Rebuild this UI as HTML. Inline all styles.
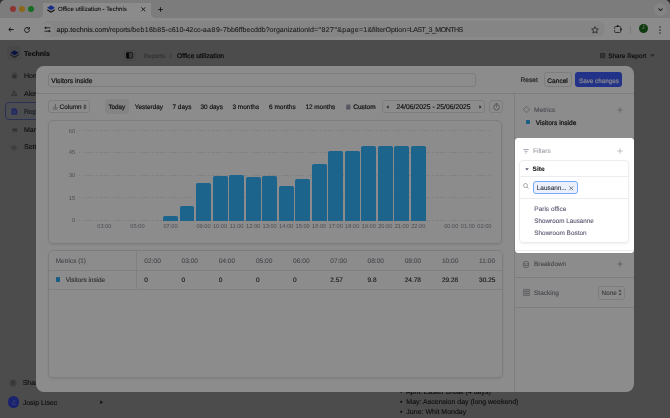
<!DOCTYPE html>
<html><head><meta charset="utf-8">
<style>
*{box-sizing:border-box;margin:0;padding:0}
html,body{width:670px;height:418px;overflow:hidden;background:#fff}
body{position:relative;font-family:"Liberation Sans",sans-serif;color:#18181b;text-rendering:geometricPrecision}
.a{position:absolute}
.t{position:absolute;white-space:nowrap;line-height:11.6px;font-size:6.5px}
.t{-webkit-text-stroke:0.1px currentColor}
.m{-webkit-text-stroke:0.2px currentColor}
svg{position:absolute;overflow:visible}
</style></head><body>
<div id="root" style="position:absolute;left:0;top:0;width:670px;height:418px;will-change:transform">

<!-- ============ CHROME ============ -->
<div class="a" style="left:0;top:0;width:670px;height:40px;background:#fdfdfd"></div>

<div class="a" style="left:0;top:0;width:42.7px;height:17.6px;background:#e2e2e2;border-radius:0 0 4.5px 0"></div>
<div class="a" style="left:150.9px;top:0;width:520px;height:17.6px;background:#e2e2e2;border-radius:0 0 0 4.5px"></div>
<div class="a" style="left:42.7px;top:0;width:108.2px;height:3px;background:#e2e2e2"></div>
<div class="a" style="left:42.7px;top:2.8px;width:108.2px;height:16px;background:#fdfdfd;border-radius:6px 6px 0 0"></div>
<div class="a" style="left:9.5px;top:6.3px;width:6px;height:6px;border-radius:50%;background:#ff5f57"></div>
<div class="a" style="left:19px;top:6.3px;width:6px;height:6px;border-radius:50%;background:#febc2e"></div>
<div class="a" style="left:28px;top:6.3px;width:6px;height:6px;border-radius:50%;background:#28c840"></div>
<!-- favicon -->
<svg style="left:46.5px;top:5.2px" width="8" height="8" viewBox="0 0 8 8"><path d="M0.3 4.2L4 6.5L7.7 4.2L7.7 5.4L4 7.7L0.3 5.4Z" fill="#0a0a0a"/><path d="M4 0.3L7.6 2.6Q7.9 2.8 7.6 3L4 5.3L0.4 3Q0.1 2.8 0.4 2.6Z" fill="#2d50f0"/></svg>
<div class="t" style="left:58px;top:3.8px;font-size:6.1px;color:#1e1e1e">Office utilization - Technis</div>
<svg style="left:141px;top:7.2px" width="4.6" height="4.6"><path d="M0.4 0.4L4.2 4.2M4.2 0.4L0.4 4.2" stroke="#222" stroke-width="0.9"/></svg>
<svg style="left:157.5px;top:6.9px" width="5" height="5"><path d="M2.5 0.2V4.8M0.2 2.5H4.8" stroke="#222" stroke-width="0.85"/></svg>
<div class="a" style="left:653.9px;top:2.5px;width:13px;height:13px;border-radius:50%;background:#f0f0f0"></div>
<svg style="left:658.1px;top:7.6px" width="5" height="3.2"><path d="M0.5 0.5L2.5 2.5L4.5 0.5" stroke="#222" stroke-width="1.05" fill="none"/></svg>


<svg style="left:7.5px;top:26.9px" width="6" height="5"><path d="M5.6 2.5H0.9M2.9 0.5L0.8 2.5L2.9 4.5" stroke="#222" stroke-width="0.95" fill="none"/></svg>
<svg style="left:24.2px;top:26.5px" width="6" height="6"><path d="M5 1.6A2.45 2.45 0 1 0 5.45 3.2" stroke="#222" stroke-width="0.95" fill="none"/><path d="M5.4 0.2V2H3.6" stroke="#222" stroke-width="0.95" fill="none"/></svg>
<div class="a" style="left:40px;top:21px;width:565px;height:16px;border-radius:8px;background:#f3f3f3"></div>
<div class="a" style="left:40px;top:22.6px;width:13.4px;height:13.4px;border-radius:50%;background:#fbfbfb"></div>
<svg style="left:43.6px;top:26px" width="7" height="7"><path d="M2.5 1.8H6.5M0.5 5.2H4.5" stroke="#333" stroke-width="0.9"/><circle cx="1.6" cy="1.8" r="1.1" fill="#333"/><circle cx="5.4" cy="5.2" r="1.1" fill="#333"/></svg>
<div class="t" style="left:56.50px;top:25px;font-size:7.05px;color:#1f1f1f;letter-spacing:0.013px">app.technis.com</div>
<div class="t" style="left:108.00px;top:25px;font-size:7.05px;color:#36393e;letter-spacing:-0.183px">/reports/</div>
<div class="t" style="left:132.20px;top:25px;font-size:7.05px;color:#36393e;letter-spacing:0.255px">beb16b85-</div>
<div class="t" style="left:168.20px;top:25px;font-size:7.05px;color:#36393e;letter-spacing:-0.036px">c610-42cc-</div>
<div class="t" style="left:202.70px;top:25px;font-size:7.05px;color:#36393e;letter-spacing:0.477px">aa89-</div>
<div class="t" style="left:223.10px;top:25px;font-size:7.05px;color:#36393e;letter-spacing:0.002px">7bb6ffbecddb</div>
<div class="t" style="left:265.70px;top:25px;font-size:7.05px;color:#36393e;letter-spacing:0.006px">?organizationId</div>
<div class="t" style="left:314.00px;top:25px;font-size:7.05px;color:#36393e;letter-spacing:0.404px">="827"</div>
<div class="t" style="left:337.30px;top:25px;font-size:7.05px;color:#36393e;letter-spacing:0.242px">&amp;page=1</div>
<div class="t" style="left:367.40px;top:25px;font-size:7.05px;color:#36393e;letter-spacing:0.001px">&amp;filterOption</div>
<div class="t" style="left:406.20px;top:25px;font-size:7.05px;color:#36393e;letter-spacing:-0.539px">=LAST_3_MONTHS</div>
<svg style="left:591px;top:25.5px" width="8" height="8" viewBox="0 0 8 8"><path d="M4 0.6L5 2.9L7.4 3.1L5.6 4.7L6.1 7.1L4 5.8L1.9 7.1L2.4 4.7L0.6 3.1L3 2.9Z" fill="none" stroke="#222" stroke-width="0.7" stroke-linejoin="round"/></svg>
<svg style="left:613px;top:24px" width="10" height="10"><rect x="1.6" y="2.5" width="6.1" height="6" rx="1" stroke="#2a2a2a" stroke-width="0.75" fill="none"/><circle cx="4.7" cy="1.9" r="0.95" fill="#2a2a2a"/><circle cx="8.2" cy="5.4" r="0.85" fill="#2a2a2a"/><circle cx="1.3" cy="5.4" r="0.7" fill="#fdfdfd"/></svg>
<div class="a" style="left:630.3px;top:25.8px;width:0.7px;height:6.8px;background:#dcdcdc"></div>
<div class="a" style="left:638.5px;top:24.1px;width:9.4px;height:9.4px;border-radius:50%;background:#1e6b1e"></div>
<div class="t" style="left:638.5px;top:23px;width:9.4px;text-align:center;font-size:5px;color:#d0e8d0;-webkit-text-stroke:0">J</div>
<svg style="left:658.5px;top:25.5px" width="2" height="8"><circle cx="1" cy="1" r="0.75" fill="#333"/><circle cx="1" cy="4" r="0.75" fill="#333"/><circle cx="1" cy="7" r="0.75" fill="#333"/></svg>

<!-- ============ PAGE ============ -->
<div class="a" style="left:0;top:40px;width:670px;height:378px;background:#fafafa"></div>
<div class="a" style="left:6.6px;top:46px;width:14.9px;height:14px;border-radius:3px;background:#eeeff6"></div>
<svg style="left:9.6px;top:49.5px" width="9" height="8" viewBox="0 0 9 8"><path d="M0.3 4.3L4.5 6.9L8.7 4.3L8.7 5.1L4.5 7.7L0.3 5.1Z" fill="#0a0a0a"/><path d="M4.5 0.3L8.7 2.8L4.5 5.4L0.3 2.8Z" fill="#2d44d8"/></svg>
<div class="t" style="left:24px;top:48.8px;font-size:7px;font-weight:700">Technis</div>
<div class="a" style="left:123.5px;top:50px;width:12.5px;height:10.5px;border-radius:3px;border:0.6px solid #e4e4e7;background:#fff"></div>
<svg style="left:126.2px;top:52px" width="7.5" height="7"><rect x="0.4" y="0.4" width="6.4" height="5.9" rx="1.2" stroke="#333" stroke-width="0.8" fill="#bbb"/><rect x="0.4" y="0.4" width="2.6" height="5.9" rx="0.8" fill="#222"/></svg>
<div class="t" style="left:143.5px;top:50.7px;font-size:6.2px;color:#a1a1aa">Reports</div>
<div class="t" style="left:170px;top:50.7px;font-size:6.1px;color:#a1a1aa">/</div>
<div class="t m" style="left:177px;top:50.7px;font-size:6.7px;color:#18181b">Office utilization</div>
<svg style="left:600.2px;top:53px" width="5.5" height="5.5"><rect x="0" y="0" width="5.3" height="5.3" rx="1" fill="#8a8a92"/><rect x="1" y="1" width="3.3" height="3.3" fill="#b0b0b8"/></svg>
<div class="t" style="left:608.3px;top:50.7px;font-size:6.4px;color:#1c1c1c;-webkit-text-stroke:0.14px currentColor">Share Report</div>
<svg style="left:650px;top:53.8px" width="5" height="3.5"><path d="M0.2 0.3H4.8L2.5 3Z" fill="#8a8a92"/></svg>

<!-- sidebar -->
<svg style="left:10.8px;top:72.3px" width="7" height="7"><circle cx="3.5" cy="3.5" r="3.2" fill="#d4d4d8"/><path d="M1.8 6.2V3.8L3.5 2.3L5.2 3.8V6.2Z" fill="#a1a1aa"/></svg>
<div class="t" style="left:24px;top:71.2px;font-size:7px;color:#27272a">Home</div>
<svg style="left:11.3px;top:90.2px" width="6.5" height="6"><path d="M3.2 0.5L6 5.6H0.4Z" fill="#d8d8de" stroke="#9a9aa4" stroke-width="0.7" stroke-linejoin="round"/></svg>
<div class="t" style="left:24px;top:88.6px;font-size:7px;color:#27272a">Alerts</div>
<div class="t" style="left:24px;top:107.0px;font-size:7px;color:#27272a">Reports</div>
<svg style="left:11.6px;top:127.6px" width="6" height="6"><rect x="0.3" y="0.4" width="5" height="2.8" rx="0.4" fill="#a8a8b8"/><path d="M1.5 3.2V5M4.1 3.2V5" stroke="#a8a8b8" stroke-width="0.7"/></svg>
<div class="t" style="left:24px;top:125.0px;font-size:7px;color:#27272a">Manage</div>
<svg style="left:11.2px;top:144.6px" width="5.6" height="5.6"><circle cx="2.8" cy="2.8" r="2.1" fill="none" stroke="#b0b0c0" stroke-width="1.3" stroke-dasharray="0.9 0.75"/><circle cx="2.8" cy="2.8" r="1.3" fill="#b0b0c0"/><circle cx="2.8" cy="2.8" r="0.6" fill="#fafafa"/></svg>
<div class="t" style="left:24px;top:142.2px;font-size:7px;color:#27272a">Settings</div>

<svg style="left:9.3px;top:379.4px" width="8" height="8"><circle cx="4" cy="4" r="3.6" fill="#d0d0d6"/><text x="4" y="5.9" font-size="5" text-anchor="middle" fill="#6a6a74" font-family="Liberation Sans">?</text></svg>
<div class="t" style="left:22.7px;top:377.8px;font-size:7px;color:#27272a">Share</div>
<div class="t" style="left:22.7px;top:397.5px;font-size:7px;color:#27272a">Josip Lisec</div>
<svg style="left:100.3px;top:400.2px" width="3.5" height="4.6"><path d="M0.3 0.3L3 2.3L0.3 4.3Z" fill="#3a3a3a"/></svg>

<!-- bullet list -->
<div class="t" style="left:400px;top:386.8px;font-size:7px;color:#27272a">&#8226;&nbsp; April: Easter break (4 days)</div>
<div class="t" style="left:400px;top:396.6px;font-size:7px;color:#27272a">&#8226;&nbsp; May: Ascension day (long weekend)</div>
<div class="t" style="left:400px;top:407px;font-size:7px;color:#27272a">&#8226;&nbsp; June: Whit Monday</div>

<!-- modal backdrop -->
<div class="a" id="backdrop" style="left:0;top:40px;width:670px;height:378px;background:rgba(0,0,0,0.45)"></div>

<div class="a" style="left:7.8px;top:396.3px;width:11.5px;height:11.5px;border-radius:50%;background:#3040c8"></div>
<svg style="left:10.5px;top:399px" width="6" height="6"><path d="M2.5 0.8V3.5A1 1 0 0 1 0.8 3.8M3.5 2.2L5.2 2.2M1 5.2H5" stroke="#7a86d8" stroke-width="0.6" fill="none"/></svg>
<div class="a" style="left:5.1px;top:102.2px;width:110px;height:18px;border-radius:4px;border:0.8px solid #4d5a98;background:rgba(150,160,220,0.12)"></div>
<svg style="left:11.2px;top:108px" width="7" height="7"><path d="M0.5 1.1A0.8 0.8 0 0 1 1.3 0.3H4.6L6.3 2V5.9A0.8 0.8 0 0 1 5.5 6.7H1.3A0.8 0.8 0 0 1 0.5 5.9Z" fill="#3f4db0"/><path d="M1.8 3.3H5M1.8 4.7H5" stroke="#7480c0" stroke-width="0.6"/></svg>
<!-- ============ MODAL ============ -->
<div class="a" id="modal" style="left:36px;top:66px;width:598px;height:326px;background:#fff;border-radius:8px;overflow:hidden">
  <!-- header -->
  <div class="a" style="left:12px;top:6.6px;width:427.5px;height:14.4px;border:0.7px solid #e4e4e7;border-radius:3px"></div>
  <div class="t m" style="left:15.3px;top:9.6px;font-size:6.7px;color:#202024">Visitors inside</div>
  <div class="t m" style="left:484.6px;top:9.4px;font-size:6.6px;color:#4a4a52">Reset</div>
  <div class="a" style="left:507.7px;top:6.4px;width:27.9px;height:14.6px;border:0.7px solid #e4e4e7;border-radius:3px;background:#fff"></div>
  <div class="t m" style="left:511.3px;top:9.5px;font-size:6.6px;color:#18181b">Cancel</div>
  <div class="a" style="left:539px;top:6px;width:47.4px;height:15.2px;border-radius:3px;background:#3d5cf8"></div>
  <div class="t m" style="left:543px;top:9.5px;font-size:6.3px;color:#eceeff">Save changes</div>
  <div class="a" style="left:0;top:26.5px;width:598px;height:0.7px;background:#e4e4e7"></div>

  <!-- toolbar -->
  <div class="a" style="left:12px;top:33.5px;width:42.4px;height:13.8px;border:0.7px solid #e4e4e7;border-radius:3px"></div>
  <svg style="left:15.5px;top:37.3px" width="6" height="7"><path d="M0.5 6.3H5.5" stroke="#b0b0b8" stroke-width="0.7"/><path d="M2 5.8V3.2M3.5 5.8V1M5 5.8V4" stroke="#9c9ca6" stroke-width="0.8"/></svg>
  <div class="t" style="left:23.6px;top:35.6px;font-size:6.4px;color:#2a2a2e;-webkit-text-stroke:0.16px currentColor">Column</div>
  <svg style="left:47.2px;top:38px" width="4" height="6"><path d="M0.2 2.4L1.9 0.2L3.6 2.4ZM0.2 3.2L1.9 5.4L3.6 3.2Z" fill="#6e6e7a"/></svg>

  <div class="a" style="left:68.8px;top:33.3px;width:24.2px;height:14.3px;border-radius:3px;background:#f0f0f2"></div>
  <div class="t m" style="left:72.4px;top:35.5px;font-size:6.3px;color:#27272a">Today</div>
  <div class="t" style="-webkit-text-stroke:0.16px currentColor;left:98.8px;top:35.5px;font-size:6.4px;color:#18181b">Yesterday</div>
  <div class="t" style="-webkit-text-stroke:0.16px currentColor;left:136.5px;top:35.5px;font-size:6.4px;color:#18181b">7 days</div>
  <div class="t" style="-webkit-text-stroke:0.16px currentColor;left:164.5px;top:35.5px;font-size:6.4px;color:#18181b">30 days</div>
  <div class="t" style="-webkit-text-stroke:0.16px currentColor;left:196.4px;top:35.5px;font-size:6.5px;color:#18181b">3 months</div>
  <div class="t" style="-webkit-text-stroke:0.16px currentColor;left:233px;top:35.5px;font-size:6.5px;color:#18181b">6 months</div>
  <div class="t" style="-webkit-text-stroke:0.16px currentColor;left:269.4px;top:35.5px;font-size:6.4px;color:#18181b">12 months</div>
  <svg style="left:309.8px;top:37.6px" width="5" height="6"><rect x="0.2" y="0.5" width="4.2" height="5" rx="0.6" fill="#9a9aae"/><path d="M0.2 1.9H4.4" stroke="#d0d0dc" stroke-width="0.5"/></svg>
  <div class="t m" style="left:317.2px;top:35.5px;font-size:6.5px;color:#18181b">Custom</div>

  <div class="a" style="left:346.4px;top:33.6px;width:102.6px;height:13.8px;border:0.7px solid #e4e4e7;border-radius:3px"></div>
  <svg style="left:350.3px;top:38.5px" width="3" height="4"><path d="M2.7 0.2L0.3 2L2.7 3.8Z" fill="#555"/></svg>
  <div class="t" style="left:360.5px;top:35.5px;font-size:6.8px;color:#1c1c20;-webkit-text-stroke:0.16px currentColor">24/06/2025 - 25/06/2025</div>
  <svg style="left:443px;top:38.5px" width="3" height="4"><path d="M0.3 0.2L2.7 2L0.3 3.8Z" fill="#555"/></svg>
  <div class="a" style="left:453px;top:33.6px;width:13.7px;height:13.8px;border:0.7px solid #e4e4e7;border-radius:3px"></div>
  <svg style="left:456.5px;top:37px" width="7" height="8"><circle cx="3.5" cy="4.3" r="2.8" stroke="#777" stroke-width="0.7" fill="none"/><path d="M2.5 0.6H4.5M3.5 2.5V4.3" stroke="#777" stroke-width="0.7"/></svg>

  <!-- right panel border -->
  <div class="a" style="left:478.3px;top:27px;width:0.8px;height:300px;background:#e4e4e7"></div>

  <!-- chart card -->
  <div class="a" style="left:12.2px;top:53.6px;width:453.8px;height:124.6px;border:0.7px solid #e4e4e7;border-radius:5px;box-shadow:0 1px 2.5px rgba(0,0,0,0.1)"></div>
  <!--chart--><div class="a" style="left:43px;top:154px;width:413.6px;height:1px;background:repeating-linear-gradient(90deg,#e6e6ea 0 1.4px,transparent 1.4px 2.8px)"></div>
<div class="t" style="left:9.200000000000003px;top:150.10px;width:30px;text-align:right;font-size:5.8px;color:#8c8c9c;-webkit-text-stroke:0">0</div>
<div class="a" style="left:43px;top:131px;width:413.6px;height:1px;background:repeating-linear-gradient(90deg,#e6e6ea 0 1.4px,transparent 1.4px 2.8px)"></div>
<div class="t" style="left:9.200000000000003px;top:127.55px;width:30px;text-align:right;font-size:5.8px;color:#8c8c9c;-webkit-text-stroke:0">15</div>
<div class="a" style="left:43px;top:109px;width:413.6px;height:1px;background:repeating-linear-gradient(90deg,#e6e6ea 0 1.4px,transparent 1.4px 2.8px)"></div>
<div class="t" style="left:9.200000000000003px;top:105.00px;width:30px;text-align:right;font-size:5.8px;color:#8c8c9c;-webkit-text-stroke:0">30</div>
<div class="a" style="left:43px;top:86px;width:413.6px;height:1px;background:repeating-linear-gradient(90deg,#e6e6ea 0 1.4px,transparent 1.4px 2.8px)"></div>
<div class="t" style="left:9.200000000000003px;top:82.45px;width:30px;text-align:right;font-size:5.8px;color:#8c8c9c;-webkit-text-stroke:0">45</div>
<div class="a" style="left:43px;top:64px;width:413.6px;height:1px;background:repeating-linear-gradient(90deg,#e6e6ea 0 1.4px,transparent 1.4px 2.8px)"></div>
<div class="t" style="left:9.200000000000003px;top:61.30px;width:30px;text-align:right;font-size:5.8px;color:#8c8c9c;-webkit-text-stroke:0">60</div>
<div class="a" style="left:127.05px;top:150.30px;width:14.9px;height:4.50px;background:#36b6ff;border-radius:1.7px 1.7px 0 0"></div>
<div class="a" style="left:143.57px;top:139.60px;width:14.9px;height:15.20px;background:#36b6ff;border-radius:1.7px 1.7px 0 0"></div>
<div class="a" style="left:160.09px;top:116.80px;width:14.9px;height:38.00px;background:#36b6ff;border-radius:1.7px 1.7px 0 0"></div>
<div class="a" style="left:176.61px;top:110.10px;width:14.9px;height:44.70px;background:#36b6ff;border-radius:1.7px 1.7px 0 0"></div>
<div class="a" style="left:193.13px;top:108.50px;width:14.9px;height:46.30px;background:#36b6ff;border-radius:1.7px 1.7px 0 0"></div>
<div class="a" style="left:209.65px;top:110.90px;width:14.9px;height:43.90px;background:#36b6ff;border-radius:1.7px 1.7px 0 0"></div>
<div class="a" style="left:226.17px;top:110.10px;width:14.9px;height:44.70px;background:#36b6ff;border-radius:1.7px 1.7px 0 0"></div>
<div class="a" style="left:242.69px;top:120.00px;width:14.9px;height:34.80px;background:#36b6ff;border-radius:1.7px 1.7px 0 0"></div>
<div class="a" style="left:259.21px;top:112.80px;width:14.9px;height:42.00px;background:#36b6ff;border-radius:1.7px 1.7px 0 0"></div>
<div class="a" style="left:275.73px;top:98.40px;width:14.9px;height:56.40px;background:#36b6ff;border-radius:1.7px 1.7px 0 0"></div>
<div class="a" style="left:292.25px;top:85.00px;width:14.9px;height:69.80px;background:#36b6ff;border-radius:1.7px 1.7px 0 0"></div>
<div class="a" style="left:308.77px;top:85.10px;width:14.9px;height:69.70px;background:#36b6ff;border-radius:1.7px 1.7px 0 0"></div>
<div class="a" style="left:325.29px;top:80.30px;width:14.9px;height:74.50px;background:#36b6ff;border-radius:1.7px 1.7px 0 0"></div>
<div class="a" style="left:341.81px;top:80.30px;width:14.9px;height:74.50px;background:#36b6ff;border-radius:1.7px 1.7px 0 0"></div>
<div class="a" style="left:358.33px;top:80.30px;width:14.9px;height:74.50px;background:#36b6ff;border-radius:1.7px 1.7px 0 0"></div>
<div class="a" style="left:374.85px;top:80.30px;width:14.9px;height:74.50px;background:#36b6ff;border-radius:1.7px 1.7px 0 0"></div>
<div class="t" style="left:53.42px;top:155.80px;width:30px;text-align:center;font-size:5.7px;color:#8c8c9c;-webkit-text-stroke:0">03:00</div>
<div class="t" style="left:86.46px;top:155.80px;width:30px;text-align:center;font-size:5.7px;color:#8c8c9c;-webkit-text-stroke:0">05:00</div>
<div class="t" style="left:119.50px;top:155.80px;width:30px;text-align:center;font-size:5.7px;color:#8c8c9c;-webkit-text-stroke:0">07:00</div>
<div class="t" style="left:152.54px;top:155.80px;width:30px;text-align:center;font-size:5.7px;color:#8c8c9c;-webkit-text-stroke:0">09:00</div>
<div class="t" style="left:169.06px;top:155.80px;width:30px;text-align:center;font-size:5.7px;color:#8c8c9c;-webkit-text-stroke:0">10:00</div>
<div class="t" style="left:185.58px;top:155.80px;width:30px;text-align:center;font-size:5.7px;color:#8c8c9c;-webkit-text-stroke:0">11:00</div>
<div class="t" style="left:202.10px;top:155.80px;width:30px;text-align:center;font-size:5.7px;color:#8c8c9c;-webkit-text-stroke:0">12:00</div>
<div class="t" style="left:218.62px;top:155.80px;width:30px;text-align:center;font-size:5.7px;color:#8c8c9c;-webkit-text-stroke:0">13:00</div>
<div class="t" style="left:235.14px;top:155.80px;width:30px;text-align:center;font-size:5.7px;color:#8c8c9c;-webkit-text-stroke:0">14:00</div>
<div class="t" style="left:251.66px;top:155.80px;width:30px;text-align:center;font-size:5.7px;color:#8c8c9c;-webkit-text-stroke:0">15:00</div>
<div class="t" style="left:268.18px;top:155.80px;width:30px;text-align:center;font-size:5.7px;color:#8c8c9c;-webkit-text-stroke:0">16:00</div>
<div class="t" style="left:284.70px;top:155.80px;width:30px;text-align:center;font-size:5.7px;color:#8c8c9c;-webkit-text-stroke:0">17:00</div>
<div class="t" style="left:301.22px;top:155.80px;width:30px;text-align:center;font-size:5.7px;color:#8c8c9c;-webkit-text-stroke:0">18:00</div>
<div class="t" style="left:317.74px;top:155.80px;width:30px;text-align:center;font-size:5.7px;color:#8c8c9c;-webkit-text-stroke:0">19:00</div>
<div class="t" style="left:334.26px;top:155.80px;width:30px;text-align:center;font-size:5.7px;color:#8c8c9c;-webkit-text-stroke:0">20:00</div>
<div class="t" style="left:350.78px;top:155.80px;width:30px;text-align:center;font-size:5.7px;color:#8c8c9c;-webkit-text-stroke:0">21:00</div>
<div class="t" style="left:367.30px;top:155.80px;width:30px;text-align:center;font-size:5.7px;color:#8c8c9c;-webkit-text-stroke:0">22:00</div>
<div class="t" style="left:400.34px;top:155.80px;width:30px;text-align:center;font-size:5.7px;color:#8c8c9c;-webkit-text-stroke:0">00:00</div>
<div class="t" style="left:416.86px;top:155.80px;width:30px;text-align:center;font-size:5.7px;color:#8c8c9c;-webkit-text-stroke:0">01:00</div>
<div class="t" style="left:433.38px;top:155.80px;width:30px;text-align:center;font-size:5.7px;color:#8c8c9c;-webkit-text-stroke:0">02:00</div>
<!--/chart-->

  <!-- table card -->
  <div class="a" style="left:12px;top:184px;width:454.5px;height:127.6px;border:0.7px solid #e4e4e7;border-radius:5px;box-shadow:0 1px 2.5px rgba(0,0,0,0.1);overflow:hidden">
    
    <div class="a" style="left:0;top:19px;width:460px;height:0.8px;background:#eaeaed"></div>
    <div class="a" style="left:0;top:38.3px;width:460px;height:0.8px;background:#eaeaed"></div>
    <div class="a" style="left:87px;top:0;width:0.8px;height:38.5px;background:#eaeaed"></div>
  </div>
  <!--table--><div class="t" style="left:19.80px;top:189.50px;font-size:6.4px;color:#80808c;font-weight:400;">Metrics (1)</div>
<div class="a" style="left:19.700000000000003px;top:211.2px;width:4.5px;height:4.5px;border-radius:1px;background:#2ea8f0"></div>
<div class="t" style="left:29.80px;top:209.20px;font-size:6.4px;color:#52525b;font-weight:400;">Visitors inside</div>
<div class="t" style="left:108.30px;top:189.50px;font-size:6.6px;color:#80808c;font-weight:400;">02:00</div>
<div class="t" style="left:108.30px;top:209.20px;font-size:6.5px;color:#2a2a30;font-weight:400;-webkit-text-stroke:0.12px currentColor">0</div>
<div class="t" style="left:145.50px;top:189.50px;font-size:6.6px;color:#80808c;font-weight:400;">03:00</div>
<div class="t" style="left:145.50px;top:209.20px;font-size:6.5px;color:#2a2a30;font-weight:400;-webkit-text-stroke:0.12px currentColor">0</div>
<div class="t" style="left:182.70px;top:189.50px;font-size:6.6px;color:#80808c;font-weight:400;">04:00</div>
<div class="t" style="left:182.70px;top:209.20px;font-size:6.5px;color:#2a2a30;font-weight:400;-webkit-text-stroke:0.12px currentColor">0</div>
<div class="t" style="left:219.90px;top:189.50px;font-size:6.6px;color:#80808c;font-weight:400;">05:00</div>
<div class="t" style="left:219.90px;top:209.20px;font-size:6.5px;color:#2a2a30;font-weight:400;-webkit-text-stroke:0.12px currentColor">0</div>
<div class="t" style="left:257.10px;top:189.50px;font-size:6.6px;color:#80808c;font-weight:400;">06:00</div>
<div class="t" style="left:257.10px;top:209.20px;font-size:6.5px;color:#2a2a30;font-weight:400;-webkit-text-stroke:0.12px currentColor">0</div>
<div class="t" style="left:294.30px;top:189.50px;font-size:6.6px;color:#80808c;font-weight:400;">07:00</div>
<div class="t" style="left:294.30px;top:209.20px;font-size:6.5px;color:#2a2a30;font-weight:400;-webkit-text-stroke:0.12px currentColor">2.57</div>
<div class="t" style="left:331.50px;top:189.50px;font-size:6.6px;color:#80808c;font-weight:400;">08:00</div>
<div class="t" style="left:331.50px;top:209.20px;font-size:6.5px;color:#2a2a30;font-weight:400;-webkit-text-stroke:0.12px currentColor">9.8</div>
<div class="t" style="left:368.70px;top:189.50px;font-size:6.6px;color:#80808c;font-weight:400;">09:00</div>
<div class="t" style="left:368.70px;top:209.20px;font-size:6.5px;color:#2a2a30;font-weight:400;-webkit-text-stroke:0.12px currentColor">24.78</div>
<div class="t" style="left:405.90px;top:189.50px;font-size:6.6px;color:#80808c;font-weight:400;">10:00</div>
<div class="t" style="left:405.90px;top:209.20px;font-size:6.5px;color:#2a2a30;font-weight:400;-webkit-text-stroke:0.12px currentColor">29.28</div>
<div class="t" style="left:443.10px;top:189.50px;font-size:6.6px;color:#80808c;font-weight:400;">11:00</div>
<div class="t" style="left:443.10px;top:209.20px;font-size:6.5px;color:#2a2a30;font-weight:400;-webkit-text-stroke:0.12px currentColor">30.25</div>
<!--/table-->

  <!-- right panel content -->
  <svg style="left:486.8px;top:40.4px" width="7" height="7"><path d="M3.5 0.3L6.7 3.5L3.5 6.7L0.3 3.5Z" stroke="#9a9aa4" stroke-width="0.7" fill="none"/></svg>
  <div class="t" style="left:498px;top:39.4px;font-size:6.6px;color:#8a8a96">Metrics</div>
  <svg style="left:581.2px;top:40.5px" width="6" height="6"><path d="M3 0.3V5.7M0.3 3H5.7" stroke="#9a9aa4" stroke-width="0.65"/></svg>
  <div class="a" style="left:489.5px;top:53.5px;width:4.5px;height:4.5px;border-radius:1px;background:#2ea8f0"></div>
  <div class="t m" style="left:499.8px;top:51.5px;font-size:6.6px;color:#18181b">Visitors inside</div>

  <svg style="left:487px;top:195px" width="6" height="7"><ellipse cx="3" cy="1.8" rx="2.5" ry="1.3" stroke="#9a9aa4" stroke-width="0.7" fill="none"/><path d="M0.5 1.8V5.2A2.5 1.3 0 0 0 5.5 5.2V1.8M0.5 3.5A2.5 1.3 0 0 0 5.5 3.5" stroke="#9a9aa4" stroke-width="0.7" fill="none"/></svg>
  <div class="t" style="left:497.9px;top:193.4px;font-size:6.5px;color:#80808c">Breakdown</div>
  <svg style="left:581.4px;top:194.8px" width="6" height="6"><path d="M3 0.3V5.7M0.3 3H5.7" stroke="#9a9aa4" stroke-width="0.7"/></svg>
  <div class="a" style="left:479px;top:211px;width:119px;height:0.7px;background:#e4e4e7"></div>
  <svg style="left:487px;top:222.5px" width="7" height="7"><rect x="0.4" y="0.4" width="6.2" height="1.7" rx="0.5" stroke="#9a9aa4" stroke-width="0.7" fill="none"/><rect x="0.4" y="2.65" width="6.2" height="1.7" rx="0.5" stroke="#9a9aa4" stroke-width="0.7" fill="none"/><rect x="0.4" y="4.9" width="6.2" height="1.7" rx="0.5" stroke="#9a9aa4" stroke-width="0.7" fill="none"/></svg>
  <div class="t" style="left:498px;top:222px;font-size:6.5px;color:#80808c">Stacking</div>
  <div class="a" style="left:562.3px;top:219.5px;width:27.2px;height:14px;border:0.7px solid #e4e4e7;border-radius:3px"></div>
  <div class="t" style="left:565.6px;top:221.6px;font-size:6.3px;color:#6a6a74">None</div>
  <svg style="left:582px;top:223px" width="4" height="7"><path d="M0.3 2.6L2 0.5L3.7 2.6ZM0.3 4.4L2 6.5L3.7 4.4Z" fill="#777"/></svg>
  <div class="a" style="left:479px;top:241px;width:119px;height:0.7px;background:#e4e4e7"></div>
</div>

<div class="a" style="left:-4px;top:-4px;width:678px;height:100px;border:4px solid #555;border-bottom:0;border-radius:9px 9px 0 0"></div>
<!-- spotlight overlay with hole -->
<div class="a" id="spot" style="left:515px;top:137.7px;width:119px;height:115.5px;border-radius:4px;box-shadow:0 0 0 1500px rgba(0,0,0,0.45)"></div>

<!-- ============ POPOVER (bright) ============ -->
<div class="a" style="left:515px;top:137.7px;width:119px;height:115.5px;border-radius:4px;background:#fff;overflow:hidden">
  <svg style="left:8.2px;top:11px" width="6" height="5"><path d="M0.3 0.5H5.7M1.3 2.3H4.7M2.3 4.1H3.7" stroke="#9a9aa8" stroke-width="0.8"/></svg>
  <div class="t" style="left:17.9px;top:8.6px;font-size:6.6px;color:#a1a1aa">Filters</div>
  <svg style="left:102px;top:10.1px" width="6" height="6"><path d="M3 0.3V5.7M0.3 3H5.7" stroke="#9a9aa4" stroke-width="0.6"/></svg>
  <div class="a" style="left:4.3px;top:22.5px;width:110px;height:83px;border:0.7px solid #ececef;border-radius:4px;box-shadow:0 1px 2px rgba(0,0,0,0.06)">
    <svg style="left:4.8px;top:6.8px" width="4" height="3"><path d="M0.2 0.2H3.8L2 2.6Z" fill="#555a70"/></svg>
    <div class="t" style="left:12.3px;top:2.6px;font-size:6.5px;font-weight:700;color:#18181b">Site</div>
    <div class="a" style="left:0;top:15.3px;width:108.6px;height:0.7px;background:#ececef"></div>
    <svg style="left:3px;top:21.6px" width="6" height="6"><circle cx="2.5" cy="2.5" r="2" stroke="#8a8a94" stroke-width="0.7" fill="none"/><path d="M4 4L5.6 5.6" stroke="#8a8a94" stroke-width="0.7"/></svg>
    <div class="a" style="left:12.8px;top:20px;width:44.5px;height:12.8px;border:0.8px solid #78a6f4;border-radius:3px;background:#eaf1fd"></div>
    <div class="t" style="left:16.5px;top:21.6px;font-size:6.4px;color:#2a2a36">Lausann...</div>
    <svg style="left:48.8px;top:24.4px" width="4.5" height="4.5"><path d="M0.3 0.3L4.2 4.2M4.2 0.3L0.3 4.2" stroke="#4a4a54" stroke-width="0.7"/></svg>
    <div class="a" style="left:0;top:37.2px;width:108.6px;height:0.7px;background:#ececef"></div>
    <div class="t" style="left:14px;top:42.9px;font-size:6.5px;color:#565670">Paris office</div>
    <div class="t" style="left:14px;top:54.7px;font-size:6.3px;color:#565670">Showroom Lausanne</div>
    <div class="t" style="left:14px;top:67px;font-size:6.4px;color:#565670">Showroom Boston</div>
  </div>
  <div class="a" style="left:0;top:112.8px;width:119px;height:0.7px;background:#ececef"></div>
</div>

</div>
</body></html>
